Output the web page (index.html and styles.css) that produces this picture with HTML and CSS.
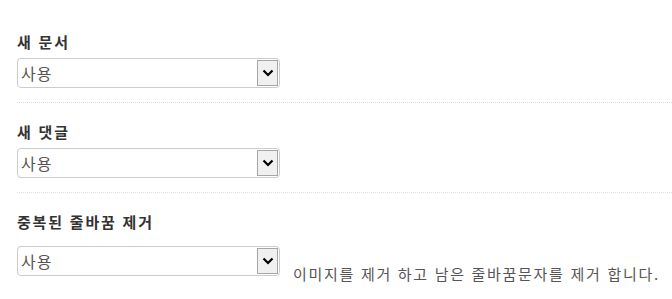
FILE: index.html
```html
<!DOCTYPE html>
<html lang="ko">
<head>
  <meta charset="UTF-8" />
  <meta name="viewport" content="width=device-width, initial-scale=1" />
  <title>설정</title>
  <link rel="stylesheet" href="styles.css">
</head>
<body>
  <div class="settings">
    <div class="field">
      <label class="field-label" for="newDoc">새 문서</label>
      <div class="select-wrap">
        <select id="newDoc">
          <option>사용</option>
          <option>사용 안함</option>
        </select>
        <span class="arrow"><svg width="12" height="8" viewBox="0 0 12 8"><path d="M1.5 1.5 L6 6 L10.5 1.5" fill="none" stroke="#000" stroke-width="2.2"/></svg></span>
      </div>
    </div>

    <div class="field">
      <label class="field-label" for="newComment">새 댓글</label>
      <div class="select-wrap">
        <select id="newComment">
          <option>사용</option>
          <option>사용 안함</option>
        </select>
        <span class="arrow"><svg width="12" height="8" viewBox="0 0 12 8"><path d="M1.5 1.5 L6 6 L10.5 1.5" fill="none" stroke="#000" stroke-width="2.2"/></svg></span>
      </div>
    </div>

    <div class="field last">
      <label class="field-label" for="lineBreak">중복된 줄바꿈 제거</label>
      <div class="row">
        <div class="select-wrap">
          <select id="lineBreak">
            <option>사용</option>
            <option>사용 안함</option>
          </select>
          <span class="arrow"><svg width="12" height="8" viewBox="0 0 12 8"><path d="M1.5 1.5 L6 6 L10.5 1.5" fill="none" stroke="#000" stroke-width="2.2"/></svg></span>
        </div>
        <p class="help">이미지를 제거 하고 남은 줄바꿈문자를 제거 합니다.</p>
      </div>
    </div>
  </div>
</body>
</html>
```
FILE: styles.css
```css
body {
  margin: 0;
  background: #fff;
  font-family: "Noto Sans CJK KR", "Noto Sans", sans-serif;
  color: #333;
}
.settings {
  padding: 32px 0 0 17px;
}
.field {
  padding-bottom: 14px;
  margin-bottom: 19px;
  border-bottom: 1px dotted #ddd;
}
.field.last {
  border-bottom: none;
}
.field-label {
  display: block;
  font-size: 15px;
  font-weight: bold;
  letter-spacing: 1.8px;
  line-height: 20px;
  color: #333;
  margin-bottom: 6px;
}
.field.last .field-label {
  margin-bottom: 14px;
}
.select-wrap {
  position: relative;
  width: 263px;
  height: 30px;
}
.select-wrap select {
  appearance: none;
  -webkit-appearance: none;
  width: 100%;
  height: 30px;
  margin: 0;
  padding: 0 0 0 3px;
  border: 1px solid #ccc;
  border-radius: 4px;
  background: #fff;
  font-family: "Noto Sans CJK KR", "Noto Sans", sans-serif;
  font-size: 16px;
  letter-spacing: 1px;
  color: #555;
  outline: none;
}
.arrow {
  position: absolute;
  top: 2px;
  right: 2px;
  bottom: 2px;
  width: 19px;
  background: #f0f0f0;
  border: 1px solid #a6a6a6;
  display: flex;
  align-items: center;
  justify-content: center;
  pointer-events: none;
}
.row {
  display: flex;
  align-items: flex-end;
}
.help {
  margin: 0 0 -8px 13px;
  font-size: 15px;
  line-height: 20px;
  color: #555;
  letter-spacing: 1.7px;
}
```
